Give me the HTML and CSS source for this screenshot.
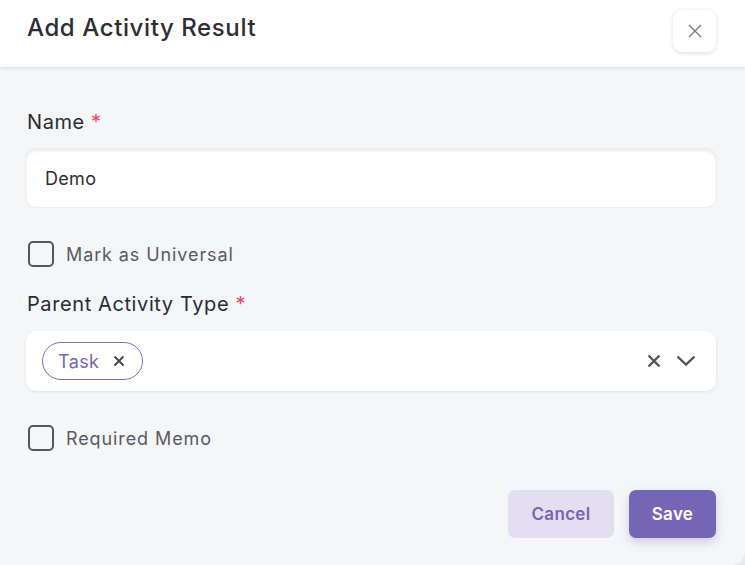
FILE: index.html
```html
<!DOCTYPE html>
<html>
<head>
<meta charset="utf-8">
<link rel="stylesheet" href="styles.css">
</head>
<body>
<div class="modal">
  <header class="modal-header">
    <h1 class="modal-title">Add Activity Result</h1>
    <button class="close-btn" aria-label="Close">
      <svg width="16" height="16" viewBox="0 0 16 16"><path d="M2 2 L14 14 M14 2 L2 14" stroke="#7a7a7a" stroke-width="1.4" fill="none"/></svg>
    </button>
  </header>
  <main class="modal-body">
    <div class="field">
      <label class="label">Name <span class="req">*</span></label>
      <div class="input">Demo</div>
    </div>
    <label class="check"><span class="box"></span><span class="check-text">Mark as Universal</span></label>
    <div class="field field-parent">
      <label class="label">Parent Activity Type <span class="req">*</span></label>
      <div class="select">
        <span class="tag">Task
          <svg width="12" height="12" viewBox="0 0 12 12"><path d="M1.5 1.5 L10.5 10.5 M10.5 1.5 L1.5 10.5" stroke="#444" stroke-width="1.8" fill="none"/></svg>
        </span>
        <span class="select-icons">
          <svg width="14" height="14" viewBox="0 0 14 14"><path d="M1.5 1.5 L12.5 12.5 M12.5 1.5 L1.5 12.5" stroke="#555" stroke-width="2.4" fill="none"/></svg>
          <svg width="20" height="12" viewBox="0 0 20 12"><path d="M1.5 1.5 L10 9.5 L18.5 1.5" stroke="#555" stroke-width="2.4" fill="none"/></svg>
        </span>
      </div>
    </div>
    <label class="check check-memo"><span class="box"></span><span class="check-text">Required Memo</span></label>
    <div class="actions">
      <button class="btn btn-cancel">Cancel</button>
      <button class="btn btn-save">Save</button>
    </div>
  </main>
</div>
</body>
</html>
```
FILE: styles.css
```css
* { box-sizing: border-box; }
html, body { margin: 0; padding: 0; }
body {
  width: 745px;
  height: 565px;
  background: #e9eaee;
  font-family: "Inter", "Noto Sans", sans-serif;
  overflow: hidden;
}
.modal {
  width: 745px;
  height: 565px;
  background: #f5f6f8;
  border-bottom-right-radius: 14px;
  overflow: hidden;
}
.modal-header {
  height: 67px;
  background: #fff;
  display: flex;
  align-items: flex-start;
  justify-content: space-between;
  padding: 0 29px 0 27px;
  box-shadow: 0 1px 4px rgba(0,0,0,0.12);
  position: relative;
  z-index: 1;
}
.modal-title {
  margin: 13px 0 0;
  font-size: 24px;
  font-weight: 500;
  color: #2c2e33;
  letter-spacing: 0.6px;
}
.close-btn {
  margin-top: 10px;
  width: 43px;
  height: 42px;
  border: none;
  background: #fff;
  border-radius: 9px;
  box-shadow: 0 1px 5px rgba(0,0,0,0.14);
  display: flex;
  align-items: center;
  justify-content: center;
  padding: 0;
}
.modal-body {
  padding: 41px 29px 0 26px;
  display: flex;
  flex-direction: column;
}
.field { display: flex; flex-direction: column; }
.label {
  font-size: 20px;
  font-weight: 400;
  color: #2a2c31;
  padding-left: 1px;
  line-height: 28px;
  letter-spacing: 0.6px;
}
.req { color: #f0475d; }
.input {
  margin-top: 13px;
  height: 58px;
  background: #fff;
  border-radius: 10px;
  box-shadow: inset 0 2px 3px rgba(0,0,0,0.08), 0 0 0 1px #eeeeee;
  display: flex;
  align-items: center;
  padding-left: 19px;
  font-size: 18px;
  color: #2c2e33;
  letter-spacing: 0.3px;
}
.check {
  display: flex;
  align-items: center;
  margin-top: 34px;
  padding-left: 2px;
}
.box {
  width: 26px;
  height: 26px;
  border: 2.5px solid #555659;
  border-radius: 5px;
}
.check-text {
  margin-left: 12px;
  font-size: 18px;
  color: #5a5b5f;
  letter-spacing: 0.9px;
}
.field-parent { margin-top: 23px; }
.select {
  margin-top: 13px;
  height: 60px;
  background: #fff;
  border-radius: 10px;
  box-shadow: 0 1px 3px rgba(0,0,0,0.09);
  display: flex;
  align-items: center;
  justify-content: space-between;
  padding: 0 20px 0 16px;
}
.tag {
  height: 38px;
  border: 1px solid #7d6fbf;
  border-radius: 19px;
  display: flex;
  align-items: center;
  gap: 14px;
  padding: 0 17px 0 15px;
  font-size: 18px;
  color: #7466b3;
  letter-spacing: 0.4px;
}
.select-icons { display: flex; align-items: center; gap: 15px; }
.check-memo { margin-top: 34px; }
.actions {
  display: flex;
  justify-content: flex-end;
  gap: 15px;
  margin-top: 39px;
}
.btn {
  height: 48px;
  border: none;
  border-radius: 7px;
  font-family: inherit;
  font-size: 17px;
  font-weight: 600;
  letter-spacing: 0.3px;
}
.btn-cancel {
  width: 106px;
  background: #e3dff1;
  color: #7466b3;
}
.btn-save {
  width: 87px;
  background: #7466b5;
  color: #fff;
  box-shadow: 0 4px 10px rgba(116,102,181,0.3);
}
```
